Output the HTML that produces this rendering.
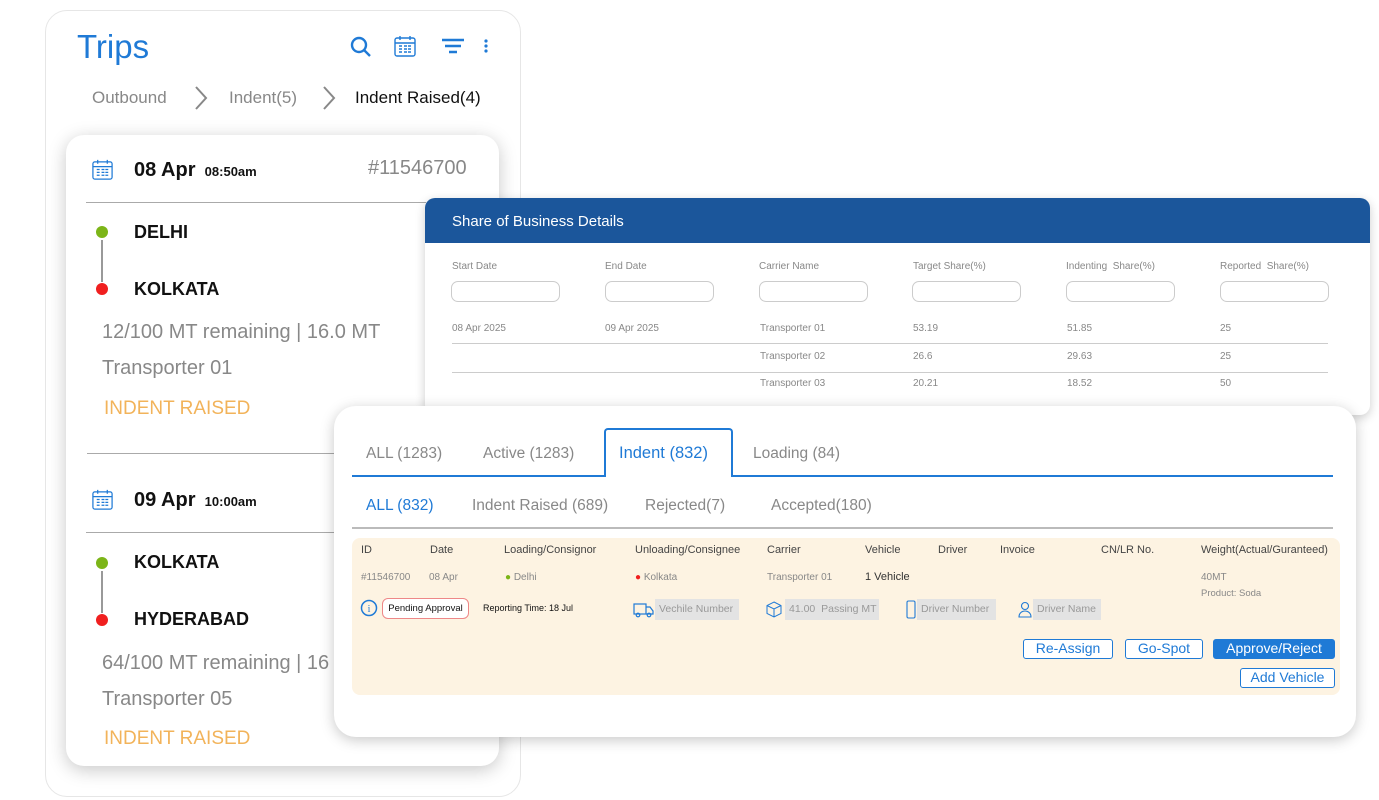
<!DOCTYPE html>
<html><head><meta charset="utf-8"><style>
*{box-sizing:border-box;margin:0;padding:0}
body{width:1379px;height:800px;background:#fff;position:relative;overflow:hidden;font-family:"Liberation Sans",sans-serif}
.a{position:absolute;white-space:nowrap}
.outer{left:45px;top:10px;width:476px;height:787px;border:1.5px solid #e6e6e6;border-radius:22px;background:#fff}
.inner{left:66px;top:135px;width:433px;height:631px;border-radius:18px;background:#fff;box-shadow:0 4px 18px rgba(0,0,0,.22)}
.share{left:425px;top:198px;width:945px;height:217px;border-radius:10px;background:#fff;box-shadow:0 3px 10px rgba(0,0,0,.2);overflow:hidden}
.shead{left:0;top:0;width:945px;height:45px;background:#1b569b}
.tabs{left:334px;top:406px;width:1022px;height:331px;border-radius:22px;background:#fff;box-shadow:0 3px 14px rgba(0,0,0,.22)}
.g{color:#888}
.inp{position:absolute;top:83px;width:109px;height:21px;border:1px solid #ccc;border-radius:7px}
.st{font-size:10px;color:#888}
.gray{background:#e3e3e3;color:#999;font-size:10.5px;padding:3px 4px;height:21px;line-height:15px}
.btn{position:absolute;height:20px;border:1.5px solid #1f7ad6;border-radius:3px;color:#1f7ad6;font-size:14px;text-align:center;line-height:17px;background:#fff}
</style></head><body>
<div class="a outer"></div>
<div class="a" style="left:77px;top:28px;font-size:33px;color:#1f7ad6">Trips</div>
<svg class="a" style="left:349px;top:35px" width="24" height="24" viewBox="0 0 24 24" fill="none" stroke="#1f7ad6" stroke-width="2.4"><circle cx="10" cy="10" r="7"/><path d="M15 15l6 6"/></svg>
<svg class="a" style="left:393px;top:34px" width="24" height="24" viewBox="0 0 24 24" fill="none" stroke="#1f7ad6" stroke-width="1.4"><rect x="2" y="4" width="20" height="18" rx="2"/><path d="M2 9h20M7 2v4M17 2v4"/><path d="M6 12h3M11 12h3M15 12h3M6 15h3M11 15h3M15 15h3M6 18h3M11 18h3M15 18h3"/></svg>
<svg class="a" style="left:441px;top:37px" width="24" height="18" viewBox="0 0 24 18" stroke="#1f7ad6" stroke-width="2.4"><path d="M1 3h22M4 9h16M8 15h8"/></svg>
<svg class="a" style="left:483px;top:38px" width="6" height="16"><circle cx="3" cy="3" r="1.6" fill="#1f7ad6"/><circle cx="3" cy="8" r="1.6" fill="#1f7ad6"/><circle cx="3" cy="13" r="1.6" fill="#1f7ad6"/></svg>
<div class="a g" style="left:92px;top:88px;font-size:17px">Outbound</div>
<svg class="a" style="left:193px;top:85px" width="16" height="26"><path d="M3 2l10 11-10 11" fill="none" stroke="#888" stroke-width="2"/></svg>
<div class="a g" style="left:229px;top:88px;font-size:17px">Indent(5)</div>
<svg class="a" style="left:321px;top:85px" width="16" height="26"><path d="M3 2l10 11-10 11" fill="none" stroke="#888" stroke-width="2"/></svg>
<div class="a" style="left:355px;top:88px;font-size:17px;color:#111">Indent Raised(4)</div>

<div class="a inner"></div>
<svg class="a" style="left:91px;top:158px" width="23" height="23" viewBox="0 0 24 24" fill="none" stroke="#1f7ad6" stroke-width="1.3"><rect x="2" y="4" width="20" height="18" rx="2"/><path d="M2 9h20M7 2v4M17 2v4"/><path d="M6 12h3M11 12h3M15 12h3M6 15h3M11 15h3M15 15h3M6 18h3M11 18h3M15 18h3"/></svg>
<div class="a" style="left:134px;top:159px;font-size:20px;font-weight:bold;color:#111">08 Apr <span style="font-size:13px">&nbsp;08:50am</span></div>
<div class="a g" style="left:368px;top:157px;font-size:20px">#11546700</div>
<div class="a" style="left:86px;top:202px;width:340px;height:1px;background:#aaa"></div>
<div class="a" style="left:96px;top:226px;width:12px;height:12px;border-radius:50%;background:#7cb518"></div>
<div class="a" style="left:101px;top:240px;width:1.5px;height:42px;background:#999"></div>
<div class="a" style="left:96px;top:283px;width:12px;height:12px;border-radius:50%;background:#f01f1f"></div>
<div class="a" style="left:134px;top:222px;font-size:18px;font-weight:bold;color:#111">DELHI</div>
<div class="a" style="left:134px;top:279px;font-size:18px;font-weight:bold;color:#111">KOLKATA</div>
<div class="a g" style="left:102px;top:321px;font-size:20px">12/100 MT remaining | 16.0 MT</div>
<div class="a g" style="left:102px;top:357px;font-size:20px">Transporter 01</div>
<div class="a" style="left:104px;top:398px;font-size:19px;color:#f2b35a">INDENT RAISED</div>
<div class="a" style="left:87px;top:453px;width:340px;height:1px;background:#aaa"></div>
<svg class="a" style="left:91px;top:488px" width="23" height="23" viewBox="0 0 24 24" fill="none" stroke="#1f7ad6" stroke-width="1.3"><rect x="2" y="4" width="20" height="18" rx="2"/><path d="M2 9h20M7 2v4M17 2v4"/><path d="M6 12h3M11 12h3M15 12h3M6 15h3M11 15h3M15 15h3M6 18h3M11 18h3M15 18h3"/></svg>
<div class="a" style="left:134px;top:489px;font-size:20px;font-weight:bold;color:#111">09 Apr <span style="font-size:13px">&nbsp;10:00am</span></div>
<div class="a" style="left:86px;top:532px;width:340px;height:1px;background:#aaa"></div>
<div class="a" style="left:96px;top:557px;width:12px;height:12px;border-radius:50%;background:#7cb518"></div>
<div class="a" style="left:101px;top:571px;width:1.5px;height:42px;background:#999"></div>
<div class="a" style="left:96px;top:614px;width:12px;height:12px;border-radius:50%;background:#f01f1f"></div>
<div class="a" style="left:134px;top:552px;font-size:18px;font-weight:bold;color:#111">KOLKATA</div>
<div class="a" style="left:134px;top:609px;font-size:18px;font-weight:bold;color:#111">HYDERABAD</div>
<div class="a g" style="left:102px;top:652px;font-size:20px">64/100 MT remaining | 16</div>
<div class="a g" style="left:102px;top:688px;font-size:20px">Transporter 05</div>
<div class="a" style="left:104px;top:728px;font-size:19px;color:#f2b35a">INDENT RAISED</div>

<div class="a share">
 <div class="a shead"></div>
 <div class="a" style="left:27px;top:15px;font-size:15px;color:#fff">Share of Business Details</div>
 <div class="a st" style="left:27px;top:63px">Start Date</div>
 <div class="a st" style="left:180px;top:63px">End Date</div>
 <div class="a st" style="left:334px;top:63px">Carrier Name</div>
 <div class="a st" style="left:488px;top:63px">Target Share(%)</div>
 <div class="a st" style="left:641px;top:63px">Indenting&nbsp; Share(%)</div>
 <div class="a st" style="left:795px;top:63px">Reported&nbsp; Share(%)</div>
 <div class="inp" style="left:26px"></div><div class="inp" style="left:180px"></div><div class="inp" style="left:334px"></div><div class="inp" style="left:487px"></div><div class="inp" style="left:641px"></div><div class="inp" style="left:795px"></div>
 <div class="a st" style="left:27px;top:125px">08 Apr 2025</div>
 <div class="a st" style="left:180px;top:125px">09 Apr 2025</div>
 <div class="a st" style="left:335px;top:125px">Transporter 01</div>
 <div class="a st" style="left:488px;top:125px">53.19</div>
 <div class="a st" style="left:642px;top:125px">51.85</div>
 <div class="a st" style="left:795px;top:125px">25</div>
 <div class="a" style="left:27px;top:145px;width:876px;height:1px;background:#ccc"></div>
 <div class="a st" style="left:335px;top:153px">Transporter 02</div>
 <div class="a st" style="left:488px;top:153px">26.6</div>
 <div class="a st" style="left:642px;top:153px">29.63</div>
 <div class="a st" style="left:795px;top:153px">25</div>
 <div class="a" style="left:27px;top:174px;width:876px;height:1px;background:#ccc"></div>
 <div class="a st" style="left:335px;top:180px">Transporter 03</div>
 <div class="a st" style="left:488px;top:180px">20.21</div>
 <div class="a st" style="left:642px;top:180px">18.52</div>
 <div class="a st" style="left:795px;top:180px">50</div>
</div>

<div class="a tabs"></div>
<div class="a" style="left:352px;top:475px;width:253px;height:2px;background:#1f7ad6"></div>
<div class="a" style="left:732px;top:475px;width:601px;height:2px;background:#1f7ad6"></div>
<div class="a" style="left:604px;top:428px;width:129px;height:49px;border:2px solid #1f7ad6;border-bottom:none;border-radius:4px 4px 0 0;background:#fff"></div>
<div class="a g" style="left:366px;top:445px;font-size:15.5px">ALL (1283)</div>
<div class="a g" style="left:483px;top:445px;font-size:15.5px">Active (1283)</div>
<div class="a" style="left:619px;top:444px;font-size:16.5px;color:#1f7ad6">Indent (832)</div>
<div class="a g" style="left:753px;top:445px;font-size:15.5px">Loading (84)</div>
<div class="a" style="left:366px;top:497px;font-size:15.5px;color:#1f7ad6">ALL (832)</div>
<div class="a g" style="left:472px;top:497px;font-size:15.5px">Indent Raised (689)</div>
<div class="a g" style="left:645px;top:497px;font-size:15.5px">Rejected(7)</div>
<div class="a g" style="left:771px;top:497px;font-size:15.5px">Accepted(180)</div>
<div class="a" style="left:352px;top:527px;width:981px;height:1.5px;background:#bbb"></div>

<div class="a" style="left:352px;top:538px;width:988px;height:157px;background:#fdf3e2;border-radius:8px"></div>
<div class="a" style="left:361px;top:544px;font-size:11px;color:#444">ID</div>
<div class="a" style="left:430px;top:544px;font-size:11px;color:#444">Date</div>
<div class="a" style="left:504px;top:544px;font-size:11px;color:#444">Loading/Consignor</div>
<div class="a" style="left:635px;top:544px;font-size:11px;color:#444">Unloading/Consignee</div>
<div class="a" style="left:767px;top:544px;font-size:11px;color:#444">Carrier</div>
<div class="a" style="left:865px;top:544px;font-size:11px;color:#444">Vehicle</div>
<div class="a" style="left:938px;top:544px;font-size:11px;color:#444">Driver</div>
<div class="a" style="left:1000px;top:544px;font-size:11px;color:#444">Invoice</div>
<div class="a" style="left:1101px;top:544px;font-size:11px;color:#444">CN/LR No.</div>
<div class="a" style="left:1201px;top:544px;font-size:11px;color:#444">Weight(Actual/Guranteed)</div>
<div class="a st" style="left:361px;top:572px">#11546700</div>
<div class="a st" style="left:429px;top:572px">08 Apr</div>
<div class="a st" style="left:505px;top:572px"><span style="color:#7cb518">●</span> Delhi</div>
<div class="a st" style="left:635px;top:572px"><span style="color:#f01f1f">●</span> Kolkata</div>
<div class="a st" style="left:767px;top:572px">Transporter 01</div>
<div class="a" style="left:865px;top:571px;font-size:11px;color:#333">1 Vehicle</div>
<div class="a st" style="left:1201px;top:572px">40MT</div>
<div class="a st" style="left:1201px;top:588px;font-size:9.5px">Product: Soda</div>
<svg class="a" style="left:360px;top:599px" width="18" height="18"><circle cx="9" cy="9" r="7.5" fill="none" stroke="#1f7ad6" stroke-width="1.5"/><text x="9" y="13" font-size="10" fill="#1f7ad6" text-anchor="middle" font-family="Liberation Serif">i</text></svg>
<div class="a" style="left:382px;top:598px;width:87px;height:21px;border:1px solid #e88;border-radius:6px;background:#fff;font-size:9.5px;text-align:center;line-height:19px;color:#111">Pending Approval</div>
<div class="a" style="left:483px;top:603px;font-size:9px;color:#111">Reporting Time: 18 Jul</div>
<svg class="a" style="left:633px;top:602px" width="22" height="16" viewBox="0 0 22 16" fill="none" stroke="#1f7ad6" stroke-width="1.2"><rect x="1" y="2" width="12" height="10"/><path d="M13 5h4l3 4v3h-7"/><circle cx="5" cy="13" r="1.8"/><circle cx="16" cy="13" r="1.8"/></svg>
<div class="a gray" style="left:655px;top:599px;width:84px">Vechile Number</div>
<svg class="a" style="left:766px;top:601px" width="16" height="17" viewBox="0 0 16 17" fill="none" stroke="#1f7ad6" stroke-width="1"><path d="M8 1l7 3.5v8L8 16 1 12.5v-8z M1 4.5L8 8l7-3.5M8 8v8"/></svg>
<div class="a gray" style="left:785px;top:599px;width:94px">41.00&nbsp; Passing MT</div>
<svg class="a" style="left:906px;top:600px" width="10" height="19"><rect x="1" y="1" width="8" height="17" rx="1.5" fill="none" stroke="#1f7ad6" stroke-width="1.1"/></svg>
<div class="a gray" style="left:917px;top:599px;width:79px">Driver Number</div>
<svg class="a" style="left:1018px;top:601px" width="14" height="17" viewBox="0 0 14 17" fill="none" stroke="#1f7ad6" stroke-width="1.1"><circle cx="7" cy="5" r="3.5"/><path d="M1 16c0-4 3-6 6-6s6 2 6 6z"/></svg>
<div class="a gray" style="left:1033px;top:599px;width:68px">Driver Name</div>
<div class="btn" style="left:1023px;top:639px;width:90px">Re-Assign</div>
<div class="btn" style="left:1125px;top:639px;width:78px">Go-Spot</div>
<div class="btn" style="left:1213px;top:639px;width:122px;background:#1f7ad6;color:#fff">Approve/Reject</div>
<div class="btn" style="left:1240px;top:668px;width:95px">Add Vehicle</div>
</body></html>
